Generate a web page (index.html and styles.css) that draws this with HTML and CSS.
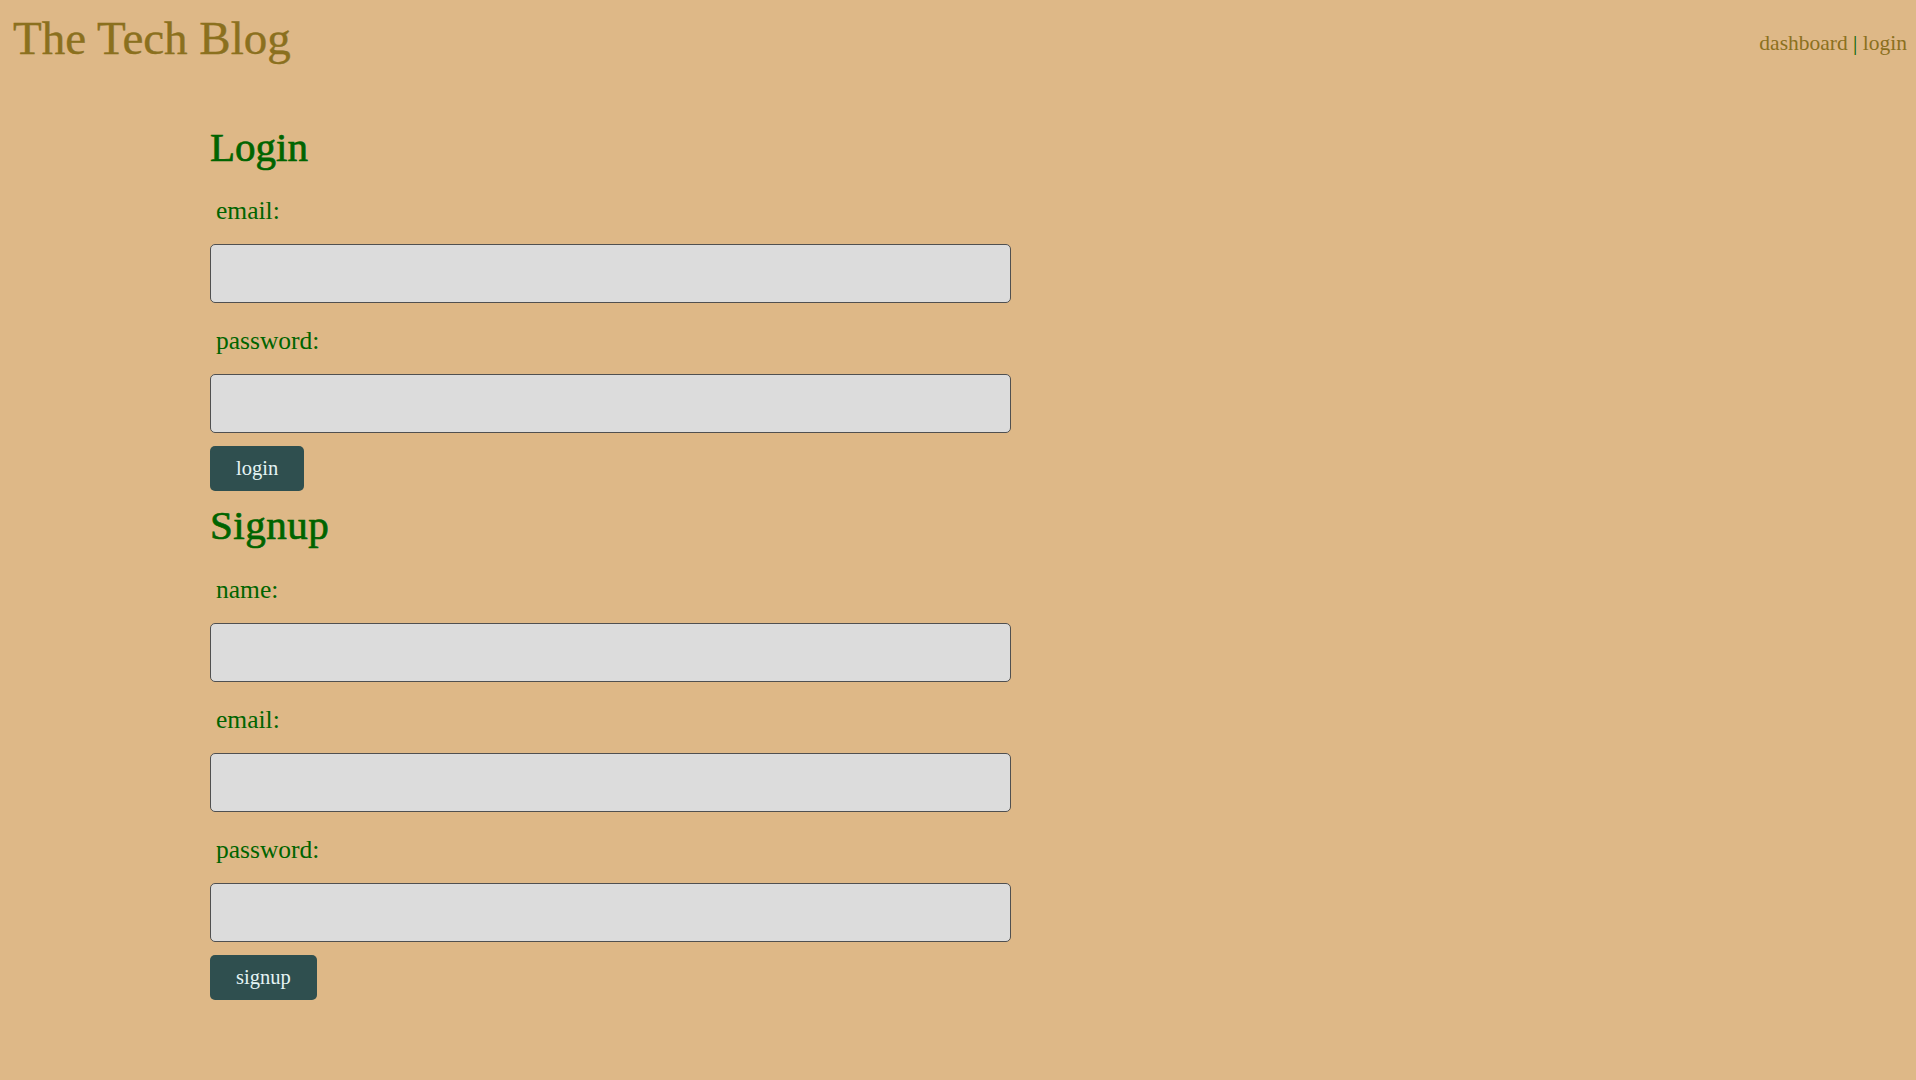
FILE: index.html
```html
<!DOCTYPE html>
<html lang="en">
<head>
<meta charset="utf-8">
<title>The Tech Blog</title>
<link rel="stylesheet" href="styles.css">
</head>
<body>
<header class="site-header">
  <h1 class="site-title">The Tech Blog</h1>
  <nav class="site-nav"><a href="#" class="nav-link">dashboard</a> <span class="nav-sep">|</span> <a href="#" class="nav-link">login</a></nav>
</header>
<main class="auth">
  <form class="auth-form">
    <h2 class="form-title">Login</h2>
    <label class="field-label" for="login-email">email:</label>
    <input class="field-input" id="login-email" type="text">
    <label class="field-label" for="login-password">password:</label>
    <input class="field-input" id="login-password" type="password">
    <button class="form-button" type="button">login</button>
  </form>
  <form class="auth-form">
    <h2 class="form-title signup-title">Signup</h2>
    <label class="field-label" for="signup-name">name:</label>
    <input class="field-input" id="signup-name" type="text">
    <label class="field-label" for="signup-email">email:</label>
    <input class="field-input" id="signup-email" type="text">
    <label class="field-label" for="signup-password">password:</label>
    <input class="field-input" id="signup-password" type="password">
    <button class="form-button" type="button">signup</button>
  </form>
</main>
</body>
</html>
```
FILE: styles.css
```css
html, body {
  margin: 0;
  padding: 0;
}

body {
  background: #deb887;
  font-family: "Liberation Serif", "Times New Roman", serif;
  min-height: 1080px;
}

.site-header {
  display: flex;
  justify-content: space-between;
  align-items: flex-start;
  padding: 8px 9px 0 13px;
}

.site-title {
  margin: 0;
  font-size: 47px;
  line-height: 60px;
  font-weight: normal;
  color: #8b701e;
  -webkit-text-stroke: 0.4px #8b701e;
}

.site-nav {
  margin-top: 22px;
  font-size: 21.5px;
  line-height: 26px;
  color: #006400;
}

.nav-link {
  color: #8b701e;
  text-decoration: none;
}

.auth {
  display: flex;
  flex-direction: column;
  padding: 55px 0 0 210px;
}

.auth-form {
  display: flex;
  flex-direction: column;
  align-items: flex-start;
  width: 801px;
}

.form-title {
  margin: 0 0 2px 0;
  font-size: 41px;
  line-height: 48px;
  font-weight: normal;
  color: #006400;
  -webkit-text-stroke: 0.7px #006400;
}

.signup-title {
  margin-top: 10px;
  margin-bottom: 3px;
  letter-spacing: 0.5px;
}

.field-label {
  display: block;
  margin: 24px 0 19px 0;
  padding-left: 6px;
  font-size: 25.5px;
  line-height: 28px;
  color: #006400;
}

.field-input {
  box-sizing: border-box;
  width: 801px;
  height: 59px;
  margin: 0;
  border: 1px solid #505050;
  border-radius: 5px;
  background: #dcdcdc;
  font-family: inherit;
  font-size: 20px;
  padding: 0 10px;
}

.form-button {
  box-sizing: border-box;
  height: 45px;
  margin-top: 13px;
  padding: 0 26px;
  border: none;
  border-radius: 5px;
  background: #2f4f4f;
  color: #e4f4f4;
  font-family: "Liberation Serif", "Times New Roman", serif;
  font-size: 20.5px;
  cursor: pointer;
}
```
